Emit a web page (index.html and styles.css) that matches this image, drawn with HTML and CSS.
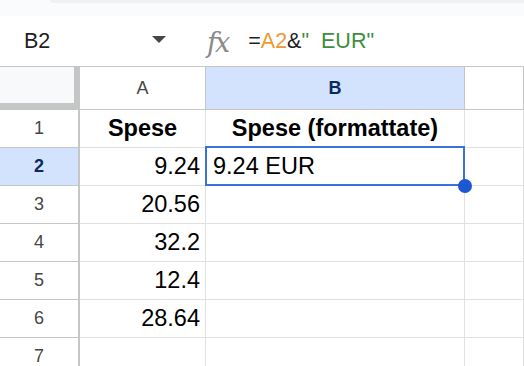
FILE: index.html
```
<!DOCTYPE html>
<html lang="it">
  <head>
    <meta charset="UTF-8" />
    <meta name="viewport" content="width=device-width, initial-scale=1.0" />
    <title>Spese</title>
    <link rel="stylesheet" href="styles.css">
  </head>
  <body>
    <div class="top-band"><div class="tab-edge"></div></div>

    <!-- Name box + formula -->
    <div class="formula-bar">
      <div class="name-box">
        <span>B2</span>
        <svg class="caret" width="14" height="8" viewBox="0 0 14 8"><path d="M0 0h14L7 7z" fill="#444746"/></svg>
      </div>
      <span class="fx">fx</span>
      <div class="formula">=<span class="ref">A2</span>&amp;<span class="str">"  EUR"</span></div>
    </div>

    <!-- Grid -->
    <div class="sheet">
      <div class="corner"></div>
      <div class="col-head">A</div>
      <div class="col-head active">B</div>
      <div class="col-head"></div>

      <div class="row-head">1</div>
      <div class="cell head-text">Spese</div>
      <div class="cell head-text">Spese (formattate)</div>
      <div class="cell"></div>

      <div class="row-head active">2</div>
      <div class="cell num">9.24</div>
      <div class="cell text selected">9.24 EUR<span class="handle"></span></div>
      <div class="cell"></div>

      <div class="row-head">3</div>
      <div class="cell num">20.56</div>
      <div class="cell"></div>
      <div class="cell"></div>

      <div class="row-head">4</div>
      <div class="cell num">32.2</div>
      <div class="cell"></div>
      <div class="cell"></div>

      <div class="row-head">5</div>
      <div class="cell num">12.4</div>
      <div class="cell"></div>
      <div class="cell"></div>

      <div class="row-head">6</div>
      <div class="cell num">28.64</div>
      <div class="cell"></div>
      <div class="cell"></div>

      <div class="row-head">7</div>
      <div class="cell"></div>
      <div class="cell"></div>
      <div class="cell"></div>
    </div>
  </body>
</html>
```

FILE: styles.css
```
/* Page */
body {
  margin: 0;
  font-family: "Liberation Sans", Arial, sans-serif;
  background-color: #fff;
  color: #000;
  overflow: hidden;
}

.top-band {
  height: 16px;
  background-color: #f9fbfd;
}

.tab-edge {
  margin-left: 50px;
  height: 3px;
  background-color: #eff1f5;
  border-bottom-left-radius: 16px;
}

/* Formula bar */
.formula-bar {
  display: flex;
  align-items: center;
  height: 50px;
  border-bottom: 1px solid #c4c7c5;
  font-size: 21.5px;
}

.name-box {
  display: flex;
  align-items: center;
  justify-content: space-between;
  width: 142px;
  margin-left: 24px;
  color: #1f1f1f;
}

.caret {
  margin-top: -2px;
}

.fx {
  margin-left: 41px;
  font-family: "DejaVu Serif", serif;
  font-style: italic;
  font-size: 27px;
  color: #8a8a8a;
  letter-spacing: -2px;
  margin-top: 2px;
}

.formula {
  margin-left: 20px;
  white-space: pre;
  color: #1f1f1f;
}

.formula .ref {
  color: #ee9a33;
}

.formula .str {
  color: #3e8e3e;
}

/* Sheet grid */
.sheet {
  display: grid;
  grid-template-columns: 80px 126px 259px 1fr;
  grid-template-rows: 43px 38px repeat(6, 38px);
}

.corner {
  background-color: #f8f9fa;
  border-right: 6px solid #c4c7c5;
  border-bottom: 7px solid #c4c7c5;
}

.col-head {
  display: flex;
  align-items: center;
  justify-content: center;
  border-right: 1px solid #c4c7c5;
  border-bottom: 1px solid #c4c7c5;
  font-size: 18px;
  color: #444746;
}

.row-head {
  display: flex;
  align-items: center;
  justify-content: center;
  border-right: 2px solid #c4c7c5;
  border-bottom: 1px solid #c4c7c5;
  font-size: 18px;
  color: #444746;
}

.col-head.active,
.row-head.active {
  background-color: #d3e3fd;
  color: #0b2a63;
  font-weight: bold;
}

.cell {
  display: flex;
  align-items: center;
  border-right: 1px solid #e1e1e1;
  border-bottom: 1px solid #e1e1e1;
  font-size: 23.5px;
  white-space: nowrap;
}

.head-text {
  justify-content: center;
  font-weight: bold;
}

.num {
  justify-content: flex-end;
  padding-right: 5px;
}

.text {
  padding-left: 7px;
}

/* Active cell */
.selected {
  position: relative;
}

.selected::after {
  content: "";
  position: absolute;
  top: -2px;
  left: -1px;
  right: -1px;
  bottom: -1px;
  border: 2px solid #3b72d9;
}

.handle {
  position: absolute;
  right: -8px;
  bottom: -8px;
  width: 14px;
  height: 14px;
  border-radius: 50%;
  background-color: #1d57d1;
  z-index: 1;
}
```
